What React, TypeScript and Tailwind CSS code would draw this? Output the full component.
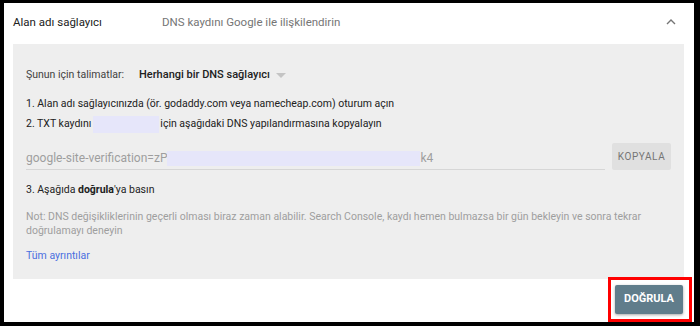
const Mask = ({ w }: { w: string }) => (
  <span className={`inline-block align-middle h-[17px] bg-[#e6e6fa] ${w}`}></span>
);

const App = () => {
  return (
    <div className="w-[700px] h-[326px] bg-black pt-[3px] pl-[4px] pr-[6px] pb-[4px] font-['Roboto',sans-serif]">
      <div className="relative h-full bg-white flex flex-col">
        <div className="h-[41px] flex items-start pt-[9px] pl-[9px] pr-[18px] text-[11.5px] leading-[20px]">
          <span className="w-[149px] text-[#212121]">Alan adı sağlayıcı</span>
          <span className="flex-1 text-[#757575]">DNS kaydını Google ile ilişkilendirin</span>
          <svg width="10" height="6" viewBox="0 0 10 6" className="mt-[7px]">
            <polyline points="1,5 5,1 9,5" fill="none" stroke="#757575" strokeWidth="1.4" />
          </svg>
        </div>

        <div className="ml-[9px] mr-[10px] h-[235px] bg-[#eeeeee] pl-[13px] pr-[13px] pt-[21px] text-[10.5px] leading-[20px] text-[#212121]">
          <div className="flex items-center">
            <span className="text-[#424242]">Şunun için talimatlar:</span>
            <span className="ml-[15px] text-[11px] font-medium text-[#212121]">Herhangi bir DNS sağlayıcı</span>
            <svg width="10" height="5" viewBox="0 0 10 5" className="ml-[6px] mt-[1px]">
              <polygon points="0,0 10,0 5,5" fill="#c4c4c4" />
            </svg>
          </div>

          <div className="mt-[9px]">1. Alan adı sağlayıcınızda (ör. godaddy.com veya namecheap.com) oturum açın</div>
          <div className="flex items-center">
            <span>2. TXT kaydını</span>
            <Mask w="w-[66px] ml-[2px]" />
            <span className="ml-[1px]">için aşağıdaki DNS yapılandırmasına kopyalayın</span>
          </div>

          <div className="mt-[9px] flex items-end gap-[7px]">
            <div className="flex-1 flex items-center border-b border-[#d6d6d6] text-[#9e9e9e] text-[12px] leading-[21px]">
              <span>google-site-verification=zP</span>
              <span className="inline-block h-[15px] w-[253px] bg-[#e6e6fa]"></span>
              <span>k4</span>
            </div>
            <button className="w-[59px] h-[27px] rounded-[2px] bg-[#e0e0e0] text-[10px] font-normal tracking-[0.6px] text-[#757575]">
              KOPYALA
            </button>
          </div>

          <div className="mt-[10px]">
            3. Aşağıda <span className="font-bold">doğrula</span>'ya basın
          </div>

          <div className="mt-[10px] leading-[14px] text-[#9e9e9e]">
            Not: DNS değişikliklerinin geçerli olması biraz zaman alabilir. Search Console, kaydı hemen bulmazsa bir gün bekleyin ve sonra tekrar doğrulamayı deneyin
          </div>

          <div className="mt-[8px] text-[#4a6ee0]">Tüm ayrıntılar</div>
        </div>

        <div className="flex justify-end pr-[11px] pt-[6px]">
          <button className="w-[68px] h-[29px] rounded-[2px] bg-[#607d8b] text-white text-[11px] font-bold shadow-[0_1px_3px_rgba(0,0,0,0.35)]">
            DOĞRULA
          </button>
        </div>

        <div className="absolute left-[604px] top-[274px] w-[84px] h-[45px] border-[3px] border-[#ff0000]"></div>
      </div>
    </div>
  );
};

export default App;
